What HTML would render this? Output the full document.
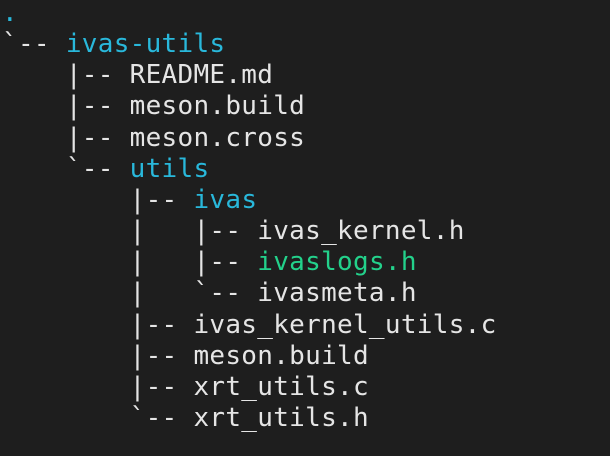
<!DOCTYPE html>
<html><head><meta charset="utf-8"><style>
html,body{margin:0;padding:0;background:#1e1e1e;width:610px;height:456px;overflow:hidden}
pre{margin:0;position:absolute;left:2px;top:-2px;font-family:"DejaVu Sans Mono","Liberation Mono",monospace;font-size:26px;line-height:31.15px;letter-spacing:0.3px;color:#e5e5e5}
.b{color:#29b8db}.g{color:#23d18b}
</style></head><body>
<pre><span class="b">.</span>
`-- <span class="b">ivas-utils</span>
    |-- README.md
    |-- meson.build
    |-- meson.cross
    `-- <span class="b">utils</span>
        |-- <span class="b">ivas</span>
        |   |-- ivas_kernel.h
        |   |-- <span class="g">ivaslogs.h</span>
        |   `-- ivasmeta.h
        |-- ivas_kernel_utils.c
        |-- meson.build
        |-- xrt_utils.c
        `-- xrt_utils.h</pre>
</body></html>
